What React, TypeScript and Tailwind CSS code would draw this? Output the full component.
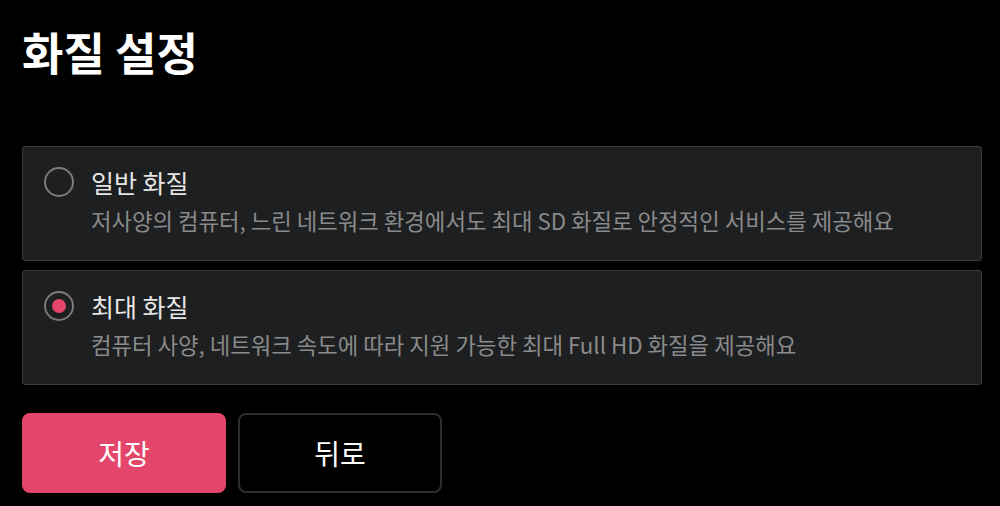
const options = [
  {
    id: "normal",
    label: "일반 화질",
    desc: "저사양의 컴퓨터, 느린 네트워크 환경에서도 최대 SD 화질로 안정적인 서비스를 제공해요",
  },
  {
    id: "max",
    label: "최대 화질",
    desc: "컴퓨터 사양, 네트워크 속도에 따라 지원 가능한 최대 Full HD 화질을 제공해요",
  },
];

export default function App() {
  const selected = "max";
  return (
    <div
      className="bg-black min-h-[506px] w-[1000px] pl-[22px] pr-[18px] pt-[22px] text-white"
      style={{ fontFamily: '"Noto Sans CJK KR", "Noto Sans", sans-serif' }}
    >
      {/* 제목 */}
      <h1 className="text-[45px] leading-[60px] font-bold">화질 설정</h1>

      {/* 옵션 목록 */}
      <div className="mt-[64px] flex flex-col gap-[9px]">
        {options.map((o) => (
          <div
            key={o.id}
            className="bg-[#1e1f21] border border-[#3a3b3e] rounded-[3px] pl-[21px] pt-[20px] pb-[25px]"
          >
            <div className="flex items-center h-[30px]">
              <div className="w-[30px] h-[30px] rounded-full border-2 border-[#7b7b7b] flex items-center justify-center">
                {selected === o.id && <div className="w-[14px] h-[14px] rounded-full bg-[#e3466a]" />}
              </div>
              <span className="ml-[17px] text-[25px] leading-[30px] text-[#e6e6e6]">{o.label}</span>
            </div>
            <p className="ml-[47px] mt-[8px] text-[22.3px] leading-[30px] text-[#8a8a8a]">{o.desc}</p>
          </div>
        ))}
      </div>

      {/* 버튼 */}
      <div className="mt-[28px] flex gap-[12px]">
        <button className="w-[204px] h-[80px] rounded-[8px] bg-[#e3466a] text-[28px] text-white">저장</button>
        <button className="w-[204px] h-[80px] rounded-[8px] border-2 border-[#2e2e2e] bg-black text-[28px] text-white">
          뒤로
        </button>
      </div>
    </div>
  );
}
